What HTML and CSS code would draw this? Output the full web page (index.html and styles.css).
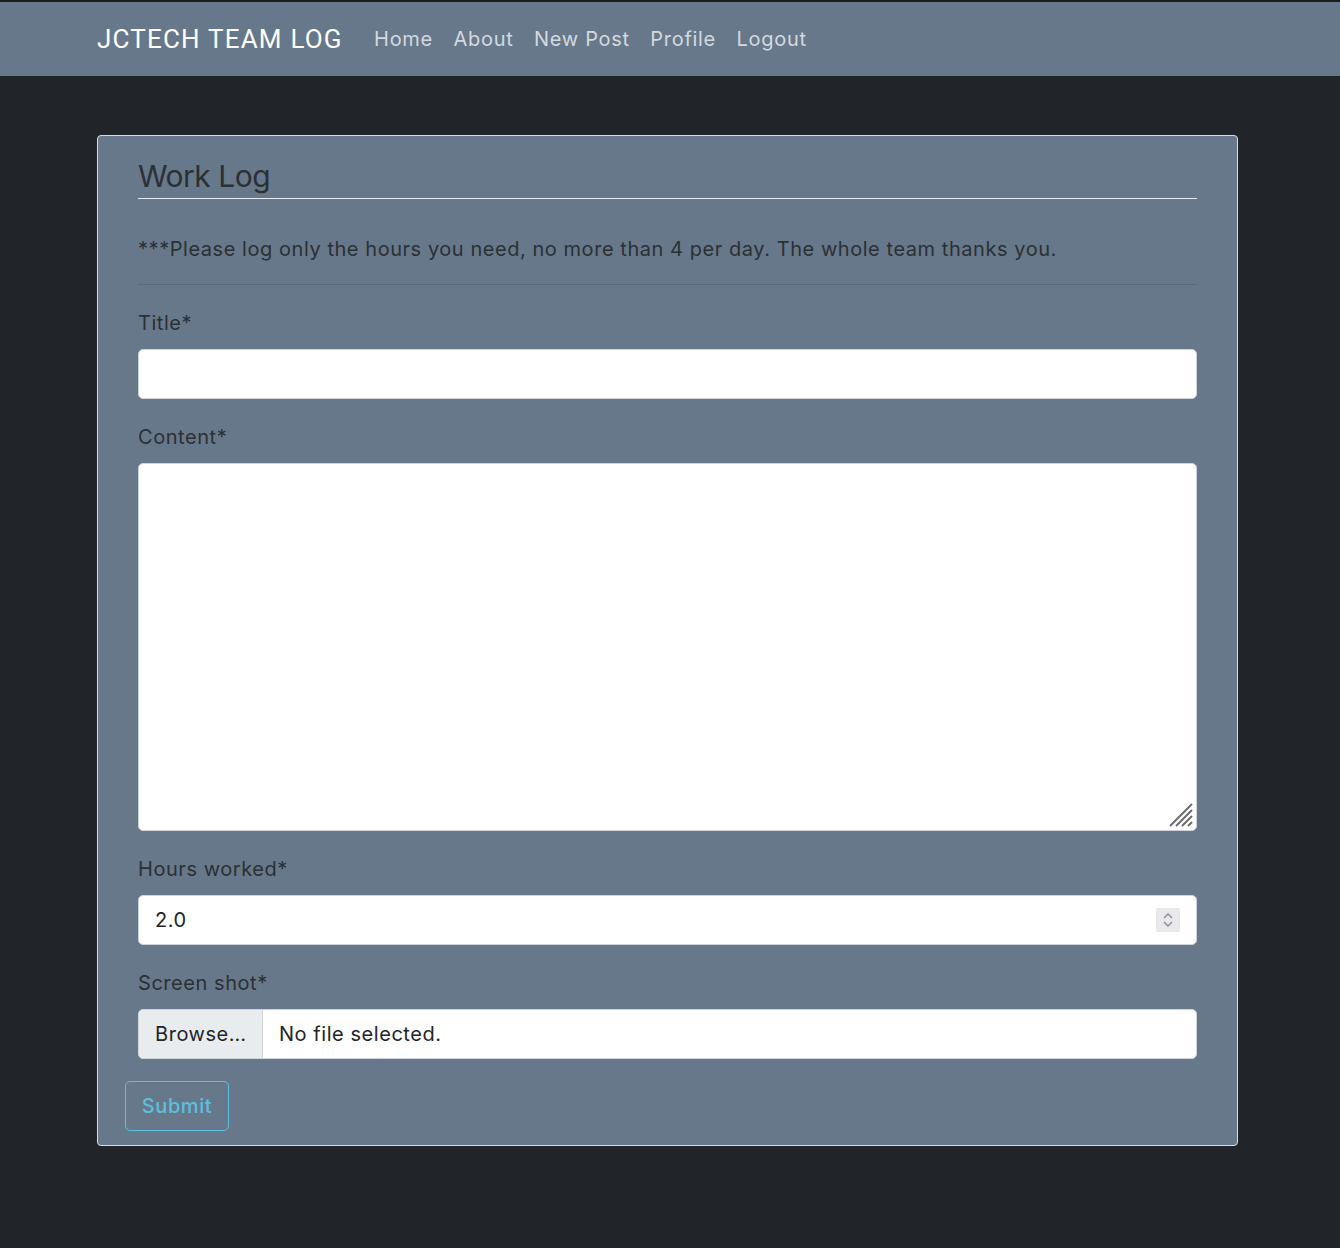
FILE: index.html
```html
<!DOCTYPE html>
<html lang="en">
<head>
<meta charset="utf-8">
<title>JCTECH TEAM LOG</title>
<link rel="stylesheet" href="styles.css">
</head>
<body>
<header class="navbar">
  <a class="brand" href="#">JCTECH TEAM LOG</a>
  <nav class="nav">
    <a href="#">Home</a>
    <a href="#">About</a>
    <a href="#">New Post</a>
    <a href="#">Profile</a>
    <a href="#">Logout</a>
  </nav>
</header>
<main class="main">
  <section class="card">
    <form class="form">
      <h1 class="legend">Work Log</h1>
      <p class="notice">***Please log only the hours you need, no more than 4 per day. The whole team thanks you.</p>
      <hr class="divider">
      <div class="group">
        <label class="label" for="title">Title*</label>
        <input class="control" id="title" type="text">
      </div>
      <div class="group">
        <label class="label" for="content">Content*</label>
        <div class="textarea-wrap">
          <textarea class="control textarea" id="content"></textarea>
          <svg class="grip" width="26" height="26" viewBox="0 0 26 26" aria-hidden="true">
            <g stroke="#6b6b6b" stroke-width="2" stroke-linecap="butt">
              <line x1="2" y1="24" x2="24" y2="2"/>
              <line x1="8" y1="24" x2="24" y2="8"/>
              <line x1="14" y1="24" x2="24" y2="14"/>
              <line x1="20" y1="24" x2="24" y2="20"/>
            </g>
          </svg>
        </div>
      </div>
      <div class="group">
        <label class="label" for="hours">Hours worked*</label>
        <div class="number-wrap">
          <input class="control number" id="hours" type="text" value="2.0">
          <span class="spinner" aria-hidden="true">
            <svg width="12" height="18" viewBox="0 0 12 18">
              <path d="M2 7 L6 3 L10 7" fill="none" stroke="#8a8a8e" stroke-width="1.4"/>
              <path d="M2 11 L6 15 L10 11" fill="none" stroke="#8a8a8e" stroke-width="1.4"/>
            </svg>
          </span>
        </div>
      </div>
      <div class="group">
        <label class="label" for="shot">Screen shot*</label>
        <div class="file">
          <span class="file-btn">Browse…</span>
          <span class="file-name">No file selected.</span>
        </div>
      </div>
      <button class="submit" type="button">Submit</button>
    </form>
  </section>
</main>
</body>
</html>
```
FILE: styles.css
```css
html, body {
  margin: 0;
  padding: 0;
}
body {
  background: #212529;
  font-family: Inter, "Liberation Sans", Arial, sans-serif;
  color: #2b3035;
  min-height: 1248px;
  border-top: 2px solid #1a1d20;
  box-sizing: border-box;
  letter-spacing: 0.55px;
}
.navbar {
  background: #67788a;
  height: 74px;
  display: flex;
  align-items: center;
  padding-left: 97px;
}
.brand {
  font-family: Roboto, "Liberation Sans", Arial, sans-serif;
  font-size: 26px;
  color: #ffffff;
  text-decoration: none;
  margin-right: 21px;
  letter-spacing: 1.2px;
}
.nav {
  display: flex;
}
.nav a {
  font-size: 20px;
  color: #d3d9df;
  text-decoration: none;
  padding: 0 10.3px;
  letter-spacing: 0.7px;
}
.main {
  padding: 59px 102px 100px 97px;
}
.card {
  background: #67788a;
  border: 1px solid #d8dde2;
  border-radius: 4px;
  padding: 20px 40px 14px 40px;
}
.form {
  display: flex;
  flex-direction: column;
}
.legend {
  font-size: 30px;
  font-weight: 400;
  line-height: 36px;
  margin: 2px 0 0 0;
  padding-bottom: 4px;
  border-bottom: 1px solid #e6eaee;
  color: #2b3035;
  letter-spacing: -0.5px;
}
.notice {
  font-size: 20px;
  line-height: 30px;
  margin: 35px 0 20px 0;
  color: #2b3035;
}
.divider {
  border: 0;
  border-top: 1px solid #5a6a7b;
  margin: 0 0 23px 0;
  width: 100%;
}
.group {
  display: flex;
  flex-direction: column;
  margin-bottom: 23px;
}
.group:last-of-type {
  margin-bottom: 22px;
}
.label {
  font-size: 20px;
  line-height: 30px;
  margin-bottom: 11px;
  color: #2b3035;
}
.control {
  box-sizing: border-box;
  height: 50px;
  width: 100%;
  border: 1px solid #ced4da;
  border-radius: 5px;
  background: #ffffff;
  font-family: Inter, "Liberation Sans", Arial, sans-serif;
  font-size: 20px;
  letter-spacing: 0.55px;
  color: #212529;
  padding: 0 16px;
  outline: none;
  margin: 0;
}
.textarea-wrap,
.number-wrap {
  position: relative;
}
.textarea {
  display: block;
  height: 368px;
  resize: none;
  padding: 10px 16px;
}
.grip {
  position: absolute;
  right: 3px;
  bottom: 3px;
}
.number {
  display: block;
}
.spinner {
  position: absolute;
  right: 17px;
  top: 13px;
  width: 24px;
  height: 24px;
  background: #e9e9ed;
  display: flex;
  align-items: center;
  justify-content: center;
}
.file {
  display: flex;
  height: 50px;
  box-sizing: border-box;
  border: 1px solid #ced4da;
  border-radius: 5px;
  background: #ffffff;
  overflow: hidden;
  font-size: 20px;
  color: #212529;
}
.file-btn {
  display: flex;
  align-items: center;
  padding: 0 16px;
  width: 124px;
  box-sizing: border-box;
  background: #e9ecef;
  border-right: 1px solid #ced4da;
}
.file-name {
  display: flex;
  align-items: center;
  padding-left: 16px;
}
.submit {
  align-self: flex-start;
  margin-left: -13px;
  height: 50px;
  width: 104px;
  box-sizing: border-box;
  background: transparent;
  border: 1px solid #5bc0de;
  border-radius: 5px;
  color: #5bc0de;
  font-family: Inter, "Liberation Sans", Arial, sans-serif;
  font-size: 20px;
  font-weight: 500;
  letter-spacing: 0.6px;
  padding: 0;
}
```
